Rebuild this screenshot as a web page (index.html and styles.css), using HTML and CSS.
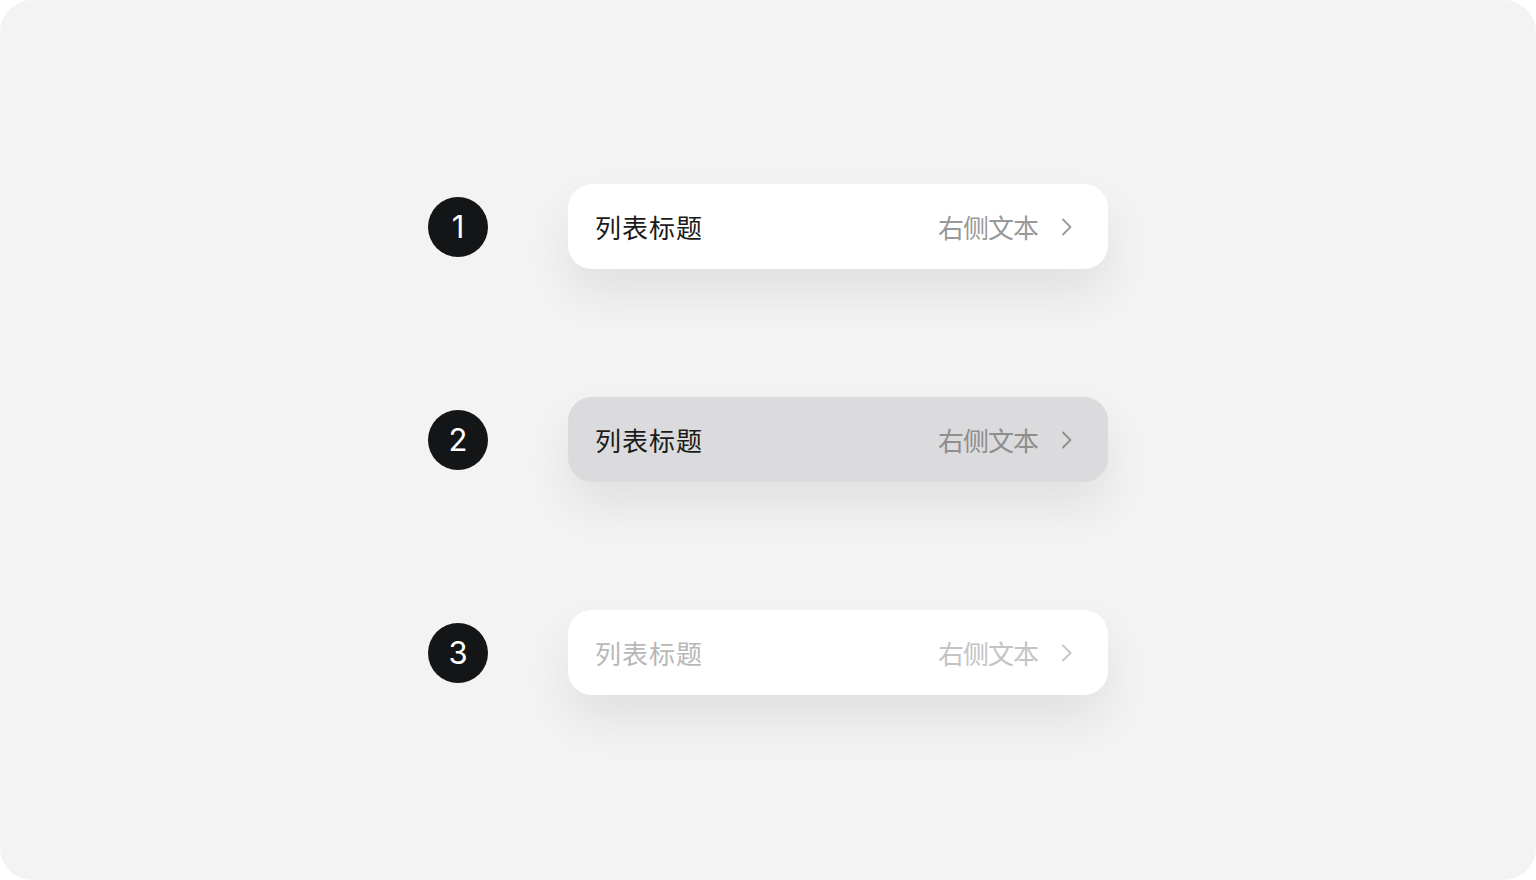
FILE: index.html
```html
<!DOCTYPE html>
<html lang="zh">
<head>
<meta charset="utf-8">
<link rel="stylesheet" href="styles.css">
</head>
<body>
<div class="stage">
  <div class="list">
    <div class="row">
      <div class="badge">1</div>
      <div class="cell">
        <span class="title">列表标题</span>
        <span class="extra">右侧文本</span>
        <svg class="chev" width="12" height="18" viewBox="0 0 12 18"><path d="M2 1.5 L9.5 9 L2 16.5" fill="none" stroke="currentColor" stroke-width="1.8" stroke-linecap="round" stroke-linejoin="round"/></svg>
      </div>
    </div>
    <div class="row">
      <div class="badge">2</div>
      <div class="cell pressed">
        <span class="title">列表标题</span>
        <span class="extra">右侧文本</span>
        <svg class="chev" width="12" height="18" viewBox="0 0 12 18"><path d="M2 1.5 L9.5 9 L2 16.5" fill="none" stroke="currentColor" stroke-width="1.8" stroke-linecap="round" stroke-linejoin="round"/></svg>
      </div>
    </div>
    <div class="row">
      <div class="badge">3</div>
      <div class="cell disabled">
        <span class="title">列表标题</span>
        <span class="extra">右侧文本</span>
        <svg class="chev" width="12" height="18" viewBox="0 0 12 18"><path d="M2 1.5 L9.5 9 L2 16.5" fill="none" stroke="currentColor" stroke-width="1.8" stroke-linecap="round" stroke-linejoin="round"/></svg>
      </div>
    </div>
  </div>
</div>
</body>
</html>
```
FILE: styles.css
```css
html, body {
  margin: 0;
  padding: 0;
  background: #ffffff;
}
body {
  font-family: "Noto Sans CJK SC", "Noto Sans", sans-serif;
}
.stage {
  width: 1536px;
  height: 880px;
  background: #f3f3f3;
  border-radius: 32px;
  display: flex;
  align-items: center;
  justify-content: center;
}
.list {
  display: flex;
  flex-direction: column;
  gap: 128px;
  margin-top: -1px;
}
.row {
  display: flex;
  align-items: center;
  gap: 80px;
}
.badge {
  width: 60px;
  height: 60px;
  border-radius: 50%;
  background: #141516;
  color: #ffffff;
  display: flex;
  align-items: center;
  justify-content: center;
  font-family: "Inter", "Noto Sans", sans-serif;
  font-size: 31px;
  font-weight: 400;
  line-height: 1;
}
.cell {
  width: 540px;
  height: 85px;
  box-sizing: border-box;
  padding: 0 35px 0 27px;
  background: #ffffff;
  border-radius: 24px;
  display: flex;
  align-items: center;
  box-shadow: 0 24px 48px rgba(0, 0, 0, 0.08);
}
.cell.pressed {
  background: #dbdbdd;
}
.title {
  font-size: 26px;
  letter-spacing: 1px;
  color: #1b1b1b;
  flex: 1;
  line-height: 1;
}
.extra {
  font-size: 26px;
  letter-spacing: -1px;
  color: #999999;
  line-height: 1;
  margin-right: 23px;
}
.chev {
  color: #9a9a9a;
  display: block;
}
.cell.pressed .extra { color: #8e8e8f; }
.cell.pressed .chev { color: #8e8e8f; }
.cell.disabled .title { color: #b8b8b8; }
.cell.disabled .extra { color: #c4c4c4; }
.cell.disabled .chev { color: #c4c4c4; }
```
